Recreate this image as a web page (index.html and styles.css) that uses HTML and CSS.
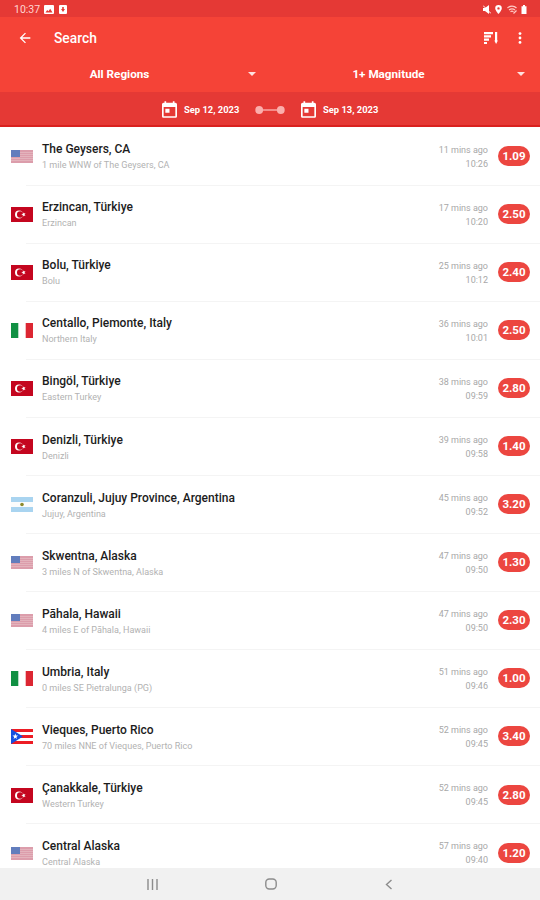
FILE: index.html
```html
<!DOCTYPE html>
<html lang="en">
<head>
    <meta charset="UTF-8">
    <meta name="viewport" content="width=device-width, initial-scale=1.0">
    <title>Search</title>
    <link rel="stylesheet" href="styles.css">
</head>
<body>

    <!-- Shared flags and icons -->
    <svg class="defs" width="0" height="0">
        <symbol id="us" viewBox="0 0 22 13">
            <rect width="22" height="13" fill="#dc9dab"/>
            <path d="M0 2.5h22M0 4.5h22M0 6.5h22M0 8.5h22M0 10.5h22" stroke="#e3b3bc" stroke-width="1"/>
            <rect width="9" height="7" fill="#627dbd"/>
        </symbol>
        <symbol id="tr" viewBox="0 0 22 15">
            <rect width="22" height="15" fill="#c4061f"/>
            <circle cx="8" cy="7.5" r="4" fill="#fff"/>
            <circle cx="9.2" cy="7.5" r="3.2" fill="#c4061f"/>
            <path d="M10.2 7.5l1.6-.6.1-1.6 1 1.3 1.6-.5-.9 1.4.9 1.4-1.6-.5-1 1.3-.1-1.6z" fill="#fff"/>
        </symbol>
        <symbol id="it" viewBox="0 0 22 15">
            <rect width="22" height="15" fill="#fff"/>
            <rect width="7.3" height="15" fill="#119043"/>
            <rect x="14.7" width="7.3" height="15" fill="#dc2632"/>
        </symbol>
        <symbol id="ar" viewBox="0 0 22 15">
            <rect width="22" height="15" fill="#fbfcfc"/>
            <path d="M0 0h22v5H0zM0 10h22v5H0z" fill="#a9d4f0"/>
            <circle cx="11" cy="7.5" r="1.8" fill="#8c8a2c"/>
        </symbol>
        <symbol id="pr" viewBox="0 0 22 15">
            <rect width="22" height="15" fill="#fff"/>
            <path d="M0 0h22v3H0zM0 6h22v3H0zM0 12h22v3H0z" fill="#ed1c24"/>
            <path d="M0 0l12 7.5L0 15z" fill="#1450e0"/>
            <path d="M4.3 4.6l.7 2h2.1L5.4 7.9l.6 2-1.7-1.2-1.7 1.2.6-2-1.7-1.3h2.1z" fill="#fff"/>
        </symbol>
        <symbol id="calendar" viewBox="0 0 24 24">
            <path d="M19 3h-1V1h-2v2H8V1H6v2H5c-1.100 0-2 .9-2 2v14c0 1.100.9 2 2 2h14c1.100 0 2-.9 2-2V5c0-1.100-.9-2-2-2zm0 16H5V8h14v11zM7 10h5v5H7z"/>
        </symbol>
    </svg>

    <header>
        <div class="status">
            <span>10:37</span>
            <svg width="10" height="9" viewBox="0 0 10 9"><path fill-rule="evenodd" d="M1 0h8a1 1 0 0 1 1 1v7a1 1 0 0 1-1 1H1a1 1 0 0 1-1-1V1a1 1 0 0 1 1-1zM1.500 7.500h7L6.200 3.800 4.400 6.200 3.200 5z"/></svg>
            <svg width="8" height="9" viewBox="0 0 8 9"><path fill-rule="evenodd" d="M1 0h6a1 1 0 0 1 1 1v7a1 1 0 0 1-1 1H1a1 1 0 0 1-1-1V1a1 1 0 0 1 1-1zM3.200 2v2H2l2 3 2-3H4.800V2z"/></svg>
            <div class="status-right">
                <svg width="8" height="9" viewBox="0 0 8 9"><path d="M0 3h2l4-3v9L2 6H0z"/><path d="M0 .5l8 8" stroke="#fff" stroke-width="1"/></svg>
                <svg width="7" height="9" viewBox="0 0 7 9"><path fill-rule="evenodd" d="M3.500 0A3.300 3.300 0 0 1 6.800 3.300C6.800 5.600 3.500 9 3.500 9S.2 5.600.2 3.300A3.300 3.300 0 0 1 3.500 0zM3.500 2.200a1.200 1.200 0 1 0 0 2.400 1.200 1.200 0 0 0 0-2.400z"/></svg>
                <svg width="10" height="9" viewBox="0 0 10 9"><path d="M.5 3C3 .5 7 .5 9.500 3M2 5c2-1.600 4-1.600 6 0M3.500 6.700c1-.7 2-.7 3 0M6.500 8.500l3-3" fill="none" stroke="#ffc9c5" stroke-width="1.200"/></svg>
                <svg width="6" height="9" viewBox="0 0 6 9"><path d="M.5 1.200H2V0h2v1.200h1.500V9h-5z"/></svg>
            </div>
        </div>

        <div class="toolbar">
            <svg class="back" width="16" height="16" viewBox="0 0 24 24"><path d="M20 11H7.800l5.600-5.600L12 4l-8 8 8 8 1.400-1.400L7.800 13H20z"/></svg>
            <h1>Search</h1>
            <svg class="sort" width="14" height="12" viewBox="0 0 14 12"><path d="M0 0h9v2.200H0zM0 3.300h7v2.200H0zM0 6.600h5v2.200H0zM0 9.900h3V12H0zM11 0h2.200v9H11zM10.300 8.500h3.600L12.100 12z"/></svg>
            <svg class="more" width="4" height="12" viewBox="0 0 4 12"><circle cx="2" cy="1.600" r="1.400"/><circle cx="2" cy="6" r="1.400"/><circle cx="2" cy="10.400" r="1.400"/></svg>
        </div>

        <div class="filters">
            <div class="filter"><span>All Regions</span><i class="caret"></i></div>
            <div class="filter"><span>1+ Magnitude</span><i class="caret"></i></div>
        </div>

        <div class="dates">
            <svg class="cal" viewBox="3 1 18 20"><use href="#calendar" width="24" height="24"/></svg>
            <span>Sep 12, 2023</span>
            <svg class="range" width="30" height="8" viewBox="0 0 30 8"><path d="M4 3.300h22v1.400H4z"/><circle cx="4.200" cy="4" r="3.900"/><circle cx="25.800" cy="4" r="3.900"/></svg>
            <svg class="cal" viewBox="3 1 18 20"><use href="#calendar" width="24" height="24"/></svg>
            <span>Sep 13, 2023</span>
        </div>
    </header>

    <!-- Earthquake list -->
    <ul class="quakes">
        <li>
            <svg class="flag"><use href="#us"/></svg>
            <div class="place"><h2>The Geysers, CA</h2><p>1 mile WNW of The Geysers, CA</p></div>
            <div class="time">11 mins ago<br>10:26</div>
            <b class="mag">1.09</b>
        </li>
        <li>
            <svg class="flag"><use href="#tr"/></svg>
            <div class="place"><h2>Erzincan, Türkiye</h2><p>Erzincan</p></div>
            <div class="time">17 mins ago<br>10:20</div>
            <b class="mag">2.50</b>
        </li>
        <li>
            <svg class="flag"><use href="#tr"/></svg>
            <div class="place"><h2>Bolu, Türkiye</h2><p>Bolu</p></div>
            <div class="time">25 mins ago<br>10:12</div>
            <b class="mag">2.40</b>
        </li>
        <li>
            <svg class="flag"><use href="#it"/></svg>
            <div class="place"><h2>Centallo, Piemonte, Italy</h2><p>Northern Italy</p></div>
            <div class="time">36 mins ago<br>10:01</div>
            <b class="mag">2.50</b>
        </li>
        <li>
            <svg class="flag"><use href="#tr"/></svg>
            <div class="place"><h2>Bingöl, Türkiye</h2><p>Eastern Turkey</p></div>
            <div class="time">38 mins ago<br>09:59</div>
            <b class="mag">2.80</b>
        </li>
        <li>
            <svg class="flag"><use href="#tr"/></svg>
            <div class="place"><h2>Denizli, Türkiye</h2><p>Denizli</p></div>
            <div class="time">39 mins ago<br>09:58</div>
            <b class="mag">1.40</b>
        </li>
        <li>
            <svg class="flag"><use href="#ar"/></svg>
            <div class="place"><h2>Coranzuli, Jujuy Province, Argentina</h2><p>Jujuy, Argentina</p></div>
            <div class="time">45 mins ago<br>09:52</div>
            <b class="mag">3.20</b>
        </li>
        <li>
            <svg class="flag"><use href="#us"/></svg>
            <div class="place"><h2>Skwentna, Alaska</h2><p>3 miles N of Skwentna, Alaska</p></div>
            <div class="time">47 mins ago<br>09:50</div>
            <b class="mag">1.30</b>
        </li>
        <li>
            <svg class="flag"><use href="#us"/></svg>
            <div class="place"><h2>Pāhala, Hawaii</h2><p>4 miles E of Pāhala, Hawaii</p></div>
            <div class="time">47 mins ago<br>09:50</div>
            <b class="mag">2.30</b>
        </li>
        <li>
            <svg class="flag"><use href="#it"/></svg>
            <div class="place"><h2>Umbria, Italy</h2><p>0 miles SE Pietralunga (PG)</p></div>
            <div class="time">51 mins ago<br>09:46</div>
            <b class="mag">1.00</b>
        </li>
        <li>
            <svg class="flag"><use href="#pr"/></svg>
            <div class="place"><h2>Vieques, Puerto Rico</h2><p>70 miles NNE of Vieques, Puerto Rico</p></div>
            <div class="time">52 mins ago<br>09:45</div>
            <b class="mag">3.40</b>
        </li>
        <li>
            <svg class="flag"><use href="#tr"/></svg>
            <div class="place"><h2>Çanakkale, Türkiye</h2><p>Western Turkey</p></div>
            <div class="time">52 mins ago<br>09:45</div>
            <b class="mag">2.80</b>
        </li>
        <li>
            <svg class="flag"><use href="#us"/></svg>
            <div class="place"><h2>Central Alaska</h2><p>Central Alaska</p></div>
            <div class="time">57 mins ago<br>09:40</div>
            <b class="mag">1.20</b>
        </li>
    </ul>

    <nav>
        <svg width="11" height="11" viewBox="0 0 11 11"><path d="M1 0v11M5.500 0v11M10 0v11"/></svg>
        <svg width="12" height="12" viewBox="0 0 12 12"><rect x=".8" y="1" width="10.400" height="10" rx="3.500"/></svg>
        <svg width="8" height="11" viewBox="0 0 8 11"><path d="M6.500 1L1.500 5.500l5 4.500"/></svg>
    </nav>

</body>
</html>
```

FILE: styles.css
```css
* {
    box-sizing: border-box;
}
body {
    margin: 0;
    height: 900px;
    display: flex;
    flex-direction: column;
    overflow: hidden;
    font-family: Roboto, sans-serif;
    background-color: #fff;
}
.defs {
    position: absolute;
}
header {
    flex: none;
    height: 127px;
    color: #fff;
    fill: #fff;
    background-color: #f54337;
    border-bottom: 2px solid #d9211f;
}
.status {
    display: flex;
    align-items: center;
    height: 17px;
    padding: 1px 13px 0 14px;
    background-color: #e53935;
    font-size: 10.5px;
    color: #ffd5d2;
}
.status span {
    width: 30px;
}
.status > svg {
    margin-right: 5px;
}
.status-right {
    display: flex;
    align-items: center;
    gap: 4.5px;
    margin-left: auto;
}
.toolbar {
    display: flex;
    align-items: center;
    height: 43px;
    padding: 0 18px 1px 17px;
}
h1 {
    flex: 1;
    margin: 0 0 0 21px;
    font-size: 13.8px;
    font-weight: 500;
}
.more {
    margin-left: 20px;
}
.filters {
    display: flex;
    height: 32px;
    padding-bottom: 5px;
    font-size: 11.7px;
    font-weight: 700;
}
.filter {
    display: flex;
    align-items: center;
    width: 269px;
    padding-right: 13px;
}
.filter span {
    flex: 1;
    padding-right: 9px;
    text-align: center;
}
.caret {
    border: 4px solid transparent;
    border-top-color: #ffe1df;
    border-bottom: 0;
}
.dates {
    display: flex;
    align-items: center;
    height: 33px;
    padding: 2px 0 0 162px;
    background-color: #e53935;
    font-size: 9.4px;
    font-weight: 700;
}
.dates span {
    width: 71px;
}
.cal {
    width: 15px;
    height: 17px;
    margin-right: 7px;
}
.range {
    margin-right: 16px;
    fill: #fbaeac;
}
.quakes {
    flex: 1;
    min-height: 0;
    overflow: hidden;
    margin: 0;
    padding: 0.5px 0 0;
    list-style: none;
}
.quakes li {
    display: flex;
    align-items: center;
    height: 58.06px;
    padding: 0 10px 0 11px;
    background: linear-gradient(#f4f4f4, #f4f4f4) 26px 100% / 100% 1px no-repeat;
}
.flag {
    width: 22px;
    height: 15px;
}
.place {
    flex: 1;
    margin-left: 9px;
    padding-top: 1.5px;
}
h2 {
    margin: 0;
    font-size: 12px;
    font-weight: 500;
    line-height: 16px;
    color: #1c1c1c;
}
p {
    margin: 0;
    font-size: 9.06px;
    line-height: 16px;
    color: #b2b2b2;
}
.time {
    margin-right: 10px;
    font-size: 9px;
    line-height: 14px;
    text-align: right;
    color: #a8a8a8;
}
.mag {
    width: 32px;
    margin-bottom: 1px;
    border-radius: 10px;
    background-color: #ec4640;
    color: #fff;
    font-size: 11.5px;
    font-weight: 700;
    line-height: 20px;
    text-align: center;
}
nav {
    display: flex;
    flex: none;
    align-items: center;
    height: 32px;
    padding-left: 147px;
    background-color: #f1f1f1;
    fill: none;
    stroke: #8c8c8c;
    stroke-width: 1.4;
}
nav svg {
    margin-right: 107px;
}
nav svg + svg {
    margin-right: 108px;
}
```
